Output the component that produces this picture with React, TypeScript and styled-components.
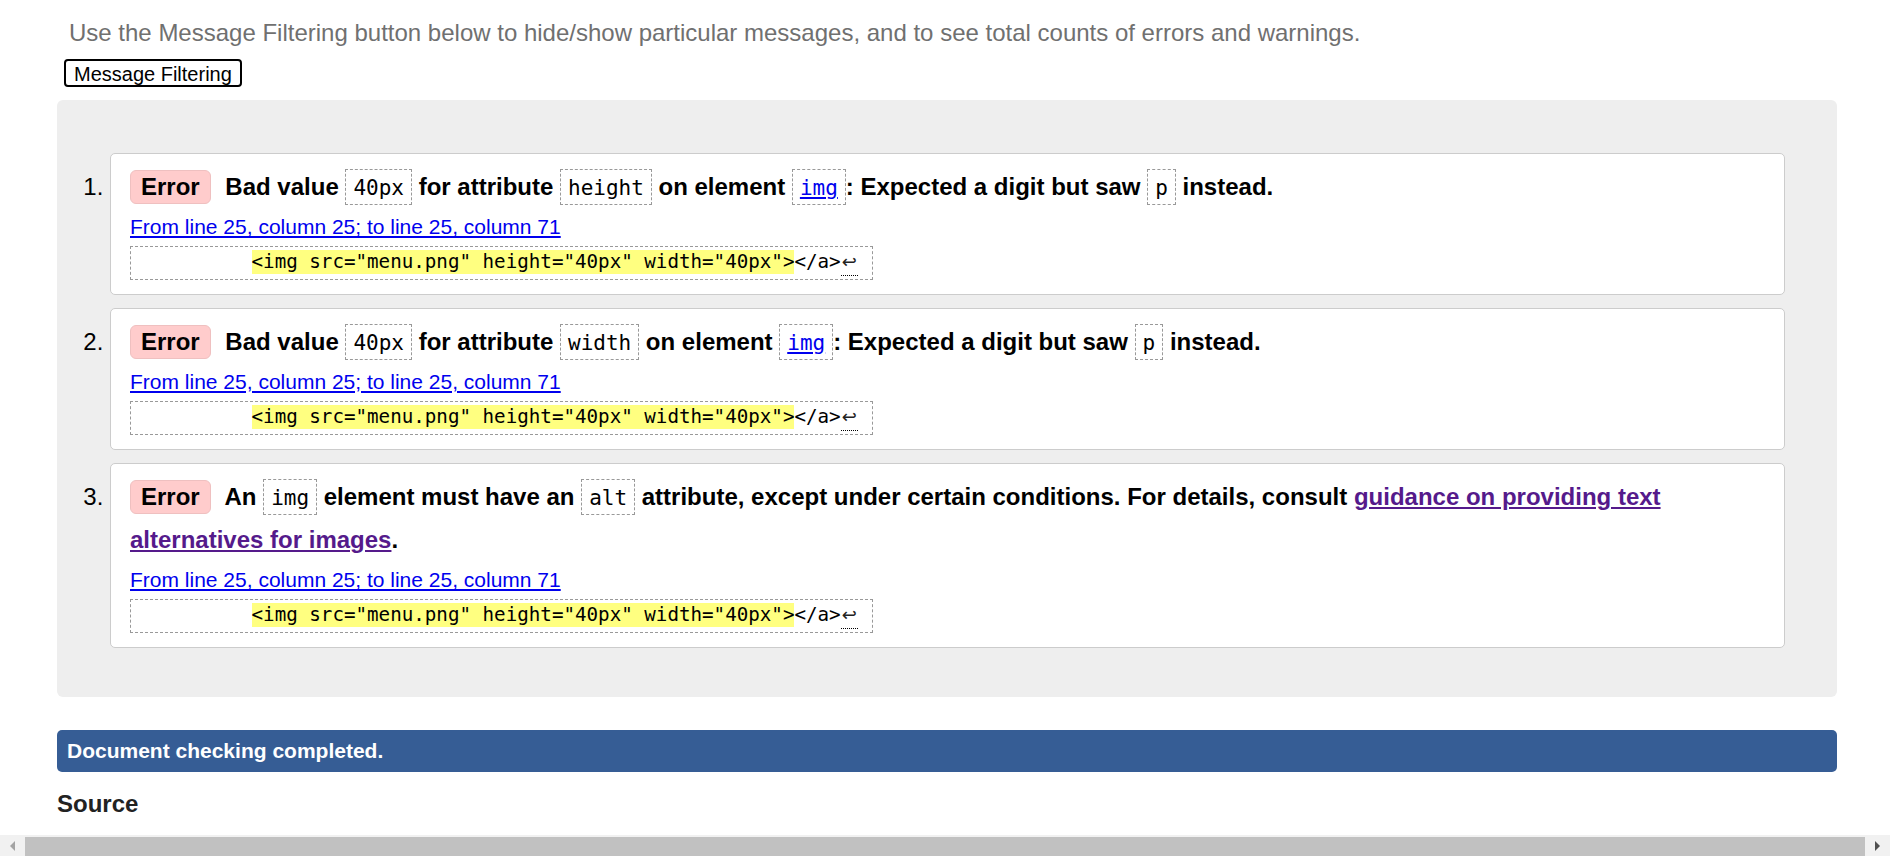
import React from 'react'
import styled, { createGlobalStyle } from 'styled-components'

const GlobalStyle = createGlobalStyle`
  html, body {
    margin: 0;
    padding: 0;
    background: #fff;
    overflow: hidden;
  }
  body {
    font-family: "Liberation Sans", Arial, sans-serif;
    color: #000;
  }
`

const Page = styled.div`
  padding: 19px 53px 0 57px;
`

const Intro = styled.p`
  margin: 0 0 0 12px;
  font-size: 24px;
  color: #707070;
`

const FilterBtn = styled.button`
  display: block;
  margin: 12px 0 0 7px;
  padding: 1px 8px 0;
  font-family: "Liberation Sans", Arial, sans-serif;
  font-size: 20px;
  color: #000;
  background: #fff;
  border: 2px solid #000;
  border-radius: 4px;
  height: 28px;
  line-height: 22px;
`

const Results = styled.div`
  margin-top: 13px;
  background: #eee;
  border-radius: 6px;
  padding: 53px 52px 49px 53px;
`

const List = styled.ol`
  margin: 0;
  padding: 0;
  list-style: decimal outside;
  font-size: 24px;
`

const Item = styled.li`
  background: #fff;
  border: 1px solid #ccc;
  border-radius: 5px;
  padding: 11px 19px 14px;
  & + & {
    margin-top: 13px;
  }
`

const Message = styled.p`
  margin: 0;
  font-weight: bold;
  line-height: 1.8;
`

const Badge = styled.span`
  display: inline-block;
  line-height: normal;
  padding: 2px 10px;
  margin-right: 8px;
  background: #fcc;
  border: 1px solid #efc0c0;
  border-radius: 6px;
`

const Code = styled.code`
  display: inline-block;
  font-family: "DejaVu Sans Mono", monospace;
  font-size: 21px;
  font-weight: normal;
  line-height: 26px;
  padding: 5px 7px 3px;
  border: 1px dashed #999;
`

const CodeLink = styled.a`
  color: #00e;
`

const Visited = styled.a`
  color: #551a8b;
`

const Location = styled.p`
  margin: 0;
  font-size: 21px;
  line-height: 1.8;
  a {
    color: #00e;
  }
`

const Extract = styled.div`
  display: inline-block;
  font-family: "DejaVu Sans Mono", monospace;
  font-size: 19.2px;
  line-height: 24px;
  white-space: pre;
  padding: 3px 14px 3px 5px;
  border: 1px dashed #999;
`

const Mark = styled.span`
  display: inline-block;
  background: #ffff80;
`

const LineFeed = styled.span`
  display: inline-block;
  width: 17px;
  font-family: "DejaVu Sans", sans-serif;
  font-size: 18px;
  color: #222;
  line-height: 20px;
  padding-bottom: 3px;
  border-bottom: 1px dotted #000;
  text-align: center;
`

const Done = styled.div`
  margin-top: 33px;
  background: #365d95;
  color: #fff;
  font-weight: bold;
  font-size: 21px;
  line-height: 1.5;
  padding: 5px 10px;
  border-radius: 5px;
`

const SourceTitle = styled.h2`
  margin: 18px 0 0;
  font-size: 24px;
  color: #222;
`

const Scrollbar = styled.div`
  position: fixed;
  left: 0;
  right: 0;
  bottom: 0;
  height: 21px;
  background: #f1f1f1;
  display: flex;
  align-items: stretch;
`

const Arrow = styled.div<{ $dir: 'left' | 'right' }>`
  width: 25px;
  display: flex;
  align-items: center;
  justify-content: center;
  &::before {
    content: '';
    border-top: 5px solid transparent;
    border-bottom: 5px solid transparent;
    ${p => p.$dir === 'left' ? 'border-right: 5px solid #a3a3a3;' : 'border-left: 5px solid #505050;'}
  }
`

const Thumb = styled.div`
  flex: 1;
  margin-top: 2px;
  background: #c1c1c1;
`

const Extracted = () => (
  <Extract>
    {'          '}
    <Mark>{'<img src="menu.png" height="40px" width="40px">'}</Mark>
    {'</a>'}
    <LineFeed>↩</LineFeed>
  </Extract>
)

const Where = () => (
  <Location>
    <a href="#l25c71">From line 25, column 25; to line 25, column 71</a>
  </Location>
)

export default function App() {
  return (
    <>
      <GlobalStyle />
      <Page>
        <Intro>
          Use the Message Filtering button below to hide/show particular messages, and to see total counts of errors and warnings.
        </Intro>
        <FilterBtn>Message Filtering</FilterBtn>
        <Results>
          <List>
            <Item>
              <Message>
                <Badge>Error</Badge> Bad value <Code>40px</Code> for attribute <Code>height</Code> on element{' '}
                <Code><CodeLink href="#img">img</CodeLink></Code>: Expected a digit but saw <Code>p</Code> instead.
              </Message>
              <Where />
              <Extracted />
            </Item>
            <Item>
              <Message>
                <Badge>Error</Badge> Bad value <Code>40px</Code> for attribute <Code>width</Code> on element{' '}
                <Code><CodeLink href="#img">img</CodeLink></Code>: Expected a digit but saw <Code>p</Code> instead.
              </Message>
              <Where />
              <Extracted />
            </Item>
            <Item>
              <Message>
                <Badge>Error</Badge> An <Code>img</Code> element must have an <Code>alt</Code> attribute, except under
                certain conditions. For details, consult{' '}
                <Visited href="#alt">guidance on providing text alternatives for images</Visited>.
              </Message>
              <Where />
              <Extracted />
            </Item>
          </List>
        </Results>
        <Done>Document checking completed.</Done>
        <SourceTitle>Source</SourceTitle>
      </Page>
      <Scrollbar>
        <Arrow $dir="left" />
        <Thumb />
        <Arrow $dir="right" />
      </Scrollbar>
    </>
  )
}
